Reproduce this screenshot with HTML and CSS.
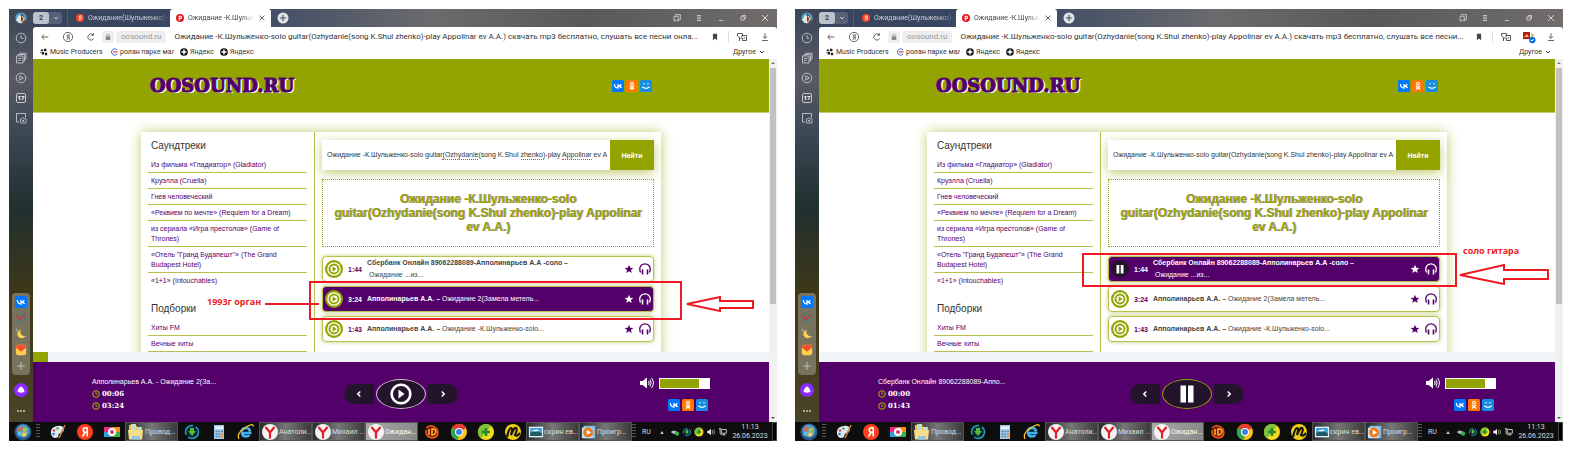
FILE: index.html
```html
<!DOCTYPE html>
<html lang="ru">
<head>
  <meta charset="UTF-8" />
  <meta name="viewport" content="width=device-width, initial-scale=1.0"/>
  <title>Ожидание - oosound.ru</title>
  <link rel="stylesheet" href="styles.css">
</head>
<body>
  <!-- icons -->
  <svg class="sprite" aria-hidden="true">
    <symbol id="avatar" viewBox="0 0 12 12"><circle cx="6" cy="6" r="5.6" fill="#4fa3cf"/><path d="M1 8 4 3l2 1 1 7-3 0z" fill="#e9e4d8"/><path d="M6 1 9 4 8 7l3 2-3 2.200-2-2z" fill="#7a3b2a"/><path d="M7 4l2 3-2 3" stroke="#f3c19a" stroke-width="1.200" fill="none"/></symbol>
    <symbol id="chevron" viewBox="0 0 8 8"><path d="M2 3l2 2 2-2" fill="none" stroke="currentColor"/></symbol>
    <symbol id="ya" viewBox="0 0 16 16"><circle cx="8" cy="8" r="8" fill="#fc3f1d"/><path d="M10.200 3.500v9M10.200 3.700H8.600c-3.200 0-3.200 4.600 0 4.600h1.600M8 8.500l-2.500 4" fill="none" stroke="#fff" stroke-width="1.600"/></symbol>
    <symbol id="pin" viewBox="0 0 16 16"><circle cx="8" cy="8" r="8" fill="#e8141c"/><path d="M6.500 13V4.500h2.200a2.300 2.300 0 0 1 0 4.800H7" fill="none" stroke="#fff" stroke-width="2.200"/></symbol>
    <symbol id="close" viewBox="0 0 10 10"><path d="M2 2l6 6M8 2L2 8" stroke="currentColor" fill="none"/></symbol>
    <symbol id="plus-round" viewBox="0 0 12 12"><circle cx="6" cy="6" r="5.500" fill="#dfe2e6"/><path d="M6 3v6M3 6h6" stroke="#4a5360" stroke-width="1.200"/></symbol>
    <symbol id="copies" viewBox="0 0 12 12"><path d="M4 3V2h6v6l-2 0M2.500 4h5v6l-2.500-1.800L2.500 10z" fill="none" stroke="currentColor"/></symbol>
    <symbol id="menu" viewBox="0 0 12 12"><path d="M3.500 3h5M3.500 5h5M3.500 7h5M3.500 9h5" stroke="currentColor"/></symbol>
    <symbol id="minimize" viewBox="0 0 12 12"><path d="M3.500 9h5" stroke="currentColor"/></symbol>
    <symbol id="restore" viewBox="0 0 12 12"><path d="M5 4V3h4v4H8M3.500 4.500h4v4h-4z" stroke="currentColor" fill="none"/></symbol>
    <symbol id="back" viewBox="0 0 12 12"><path d="M10 6H2.500M5 3L2.200 6 5 9" stroke="currentColor" fill="none"/></symbol>
    <symbol id="ya-ring" viewBox="0 0 12 12"><circle cx="6" cy="6" r="4.600" stroke="currentColor" stroke-width=".8" fill="none"/><path d="M7.200 3.500v5.200M7.200 3.700h-.8c-1.800 0-1.800 2.500 0 2.500h.8M6.200 6.200L4.800 8.700" stroke="currentColor" stroke-width=".8" fill="none"/></symbol>
    <symbol id="reload" viewBox="0 0 12 12"><path d="M9.300 7.500A3.700 3.700 0 1 1 8.300 3.200M9 1.500v2.400H6.500" stroke="currentColor" fill="none"/></symbol>
    <symbol id="lock" viewBox="0 0 12 12"><rect x="2.500" y="5" width="7" height="5.500" rx=".8" fill="currentColor"/><path d="M4 5V3.800a2 2 0 0 1 4 0V5" stroke="currentColor" fill="none"/></symbol>
    <symbol id="bookmark" viewBox="0 0 12 12"><path d="M3.500 2h5v8L6 7.800 3.500 10z" fill="currentColor"/></symbol>
    <symbol id="translate" viewBox="0 0 12 12"><path d="M5.500 4.500h5v5h-4V7M3.500 10V6.500L1.500 5V2.500h5V5L5 6.500V8" stroke="currentColor" stroke-width=".9" fill="none"/><path d="M7.500 7h1.500" stroke="currentColor"/></symbol>
    <symbol id="download" viewBox="0 0 12 12"><path d="M6 1.500v6M3.500 5.200L6 7.700l2.500-2.500M2.500 10.200h7" stroke="currentColor" fill="none"/></symbol>
    <symbol id="ext" viewBox="0 0 14 14"><rect x="1" y="2" width="7" height="7" fill="#b01b12"/><path d="M2 7l3-3 2 3z" fill="#f6c43c"/><path d="M9 3l3 2-2 3" fill="#e5a52a"/><circle cx="10.300" cy="10" r="3.200" fill="#0a6ee0"/><path d="M8.800 10l1.200 1 1.700-2" stroke="#fff" fill="none"/></symbol>
    <symbol id="dots-x" viewBox="0 0 10 10"><path d="M1 2h3v2H1zM5 1h3v3H5zM2 5h3v3H2zM6 6h3v3H6zM0 5h1v1H0z" fill="#222"/></symbol>
    <symbol id="bluec" viewBox="0 0 10 10"><path d="M9 2.500A4 4 0 1 0 9 7.500" stroke="#3f6fe8" stroke-width="1.200" fill="none"/><path d="M3.500 4.300h6M4 6h5" stroke="#e0533c"/></symbol>
    <symbol id="star-dark" viewBox="0 0 10 10"><circle cx="5" cy="5" r="4.800" fill="#111"/><path d="M5 1.500Q5.200 4.800 8.500 5 5.200 5.200 5 8.500 4.800 5.200 1.500 5 4.800 4.800 5 1.500z" fill="#fff" stroke="#fff" stroke-width=".5"/></symbol>
    <symbol id="clock" viewBox="0 0 12 12"><circle cx="6" cy="6" r="4.800" stroke="currentColor" stroke-width=".9" fill="none"/><path d="M6 3v3.300h2.500" stroke="currentColor" stroke-width=".9" fill="none"/></symbol>
    <symbol id="time" viewBox="0 0 8 8"><circle cx="4" cy="4" r="3.300" stroke="currentColor" fill="none"/><path d="M4 2v2.300h1.500" stroke="currentColor" stroke-width=".8" fill="none"/></symbol>
    <symbol id="stack" viewBox="0 0 12 12"><path d="M1.500 4h6.500v7H1.500zM3 4V2.500h6.500V9H8M5 2.300V1.200h6V7H9.700M3 6.500h3.500M3 8.500h2.500" stroke="currentColor" stroke-width=".9" fill="none"/></symbol>
    <symbol id="play-ring" viewBox="0 0 12 12"><circle cx="6" cy="6" r="4.800" stroke="currentColor" stroke-width=".9" fill="none"/><path d="M4.800 3.800v4.400L8.300 6z" stroke="currentColor" stroke-width=".9" fill="none"/></symbol>
    <symbol id="shot" viewBox="0 0 12 12"><path d="M4 10H1.500V1.500h9v4" stroke="currentColor" stroke-width=".9" fill="none"/><path d="M5.500 7h1l.7-1h2l.7 1H11v4H5.500z" stroke="currentColor" stroke-width=".8" fill="none"/><circle cx="8.200" cy="8.800" r="1" fill="currentColor"/></symbol>
    <symbol id="vk" viewBox="0 0 12 12"><rect width="12" height="12" rx="1.500" fill="#07f"/><path d="M2.300 4c.3 2.600 1.500 4 3.700 4V4M9.300 4C8.700 5.200 7.800 6 6.200 6 7.800 6 9 6.800 9.500 8" stroke="#fff" stroke-width="1.300" fill="none"/></symbol>
    <symbol id="ok" viewBox="0 0 12 12"><rect width="12" height="12" rx="1.500" fill="#f70"/><circle cx="6" cy="3.700" r="1.400" stroke="#fff" stroke-width="1.100" fill="none"/><path d="M3.700 6.300q2.300 1.600 4.600 0M6 7.200v.4M6 7.300L4 9.700M6 7.300l2 2.400" stroke="#fff" stroke-width="1.200" fill="none"/></symbol>
    <symbol id="mm" viewBox="0 0 12 12"><rect width="12" height="12" rx="1.500" fill="#168de2"/><path d="M4 3v1.500M8 3v1.500M2 7.200h1.200q2.800 2.200 5.600 0H10" stroke="#fff" stroke-width="1.100" fill="none"/></symbol>
    <symbol id="bird" viewBox="0 0 14 14"><circle cx="7" cy="7" r="4.500" stroke="#2b7d8d" fill="none"/><path d="M1 3l5 5 7-5-5 5-3 1z" fill="#e02c34" stroke="#e02c34" stroke-width=".6"/></symbol>
    <symbol id="moon" viewBox="0 0 14 14"><path d="M7 2a5 5 0 1 0 5 7.500A5 5 0 0 1 7 2z" fill="#ffd24a"/><path d="M1 4l1-3 1 3 M9 10h4" stroke="#cfd5da" stroke-width=".6" fill="none"/></symbol>
    <symbol id="mail" viewBox="0 0 14 14"><rect x="1" y="1" width="12" height="12" rx="2.500" fill="#ffcf4a"/><path d="M1 4Q1 1 4 1h6q3 0 3 3L7 9z" fill="#f4512c"/></symbol>
    <symbol id="plus" viewBox="0 0 12 12"><path d="M6 2v8M2 6h8" stroke="currentColor" stroke-width=".9"/></symbol>
    <symbol id="alice" viewBox="0 0 14 14"><circle cx="7" cy="7" r="7" fill="#8a2bff"/><path d="M7 3.500c1.200 0 3.500 3.500 3.500 4.800C10.500 10.200 3.500 10.200 3.500 8.300 3.500 7 5.800 3.500 7 3.500z" fill="#fff"/></symbol>
    <symbol id="more" viewBox="0 0 12 12"><path d="M2 6h2M5 6h2M8 6h2" stroke="currentColor" stroke-width="1.400"/></symbol>
    <symbol id="play" viewBox="0 0 18 18"><circle cx="9" cy="9" r="9" fill="#93a300"/><circle cx="9" cy="9" r="6.800" fill="#fff"/><circle cx="9" cy="9" r="4.500" fill="none" stroke="#93a300" stroke-width="1.900"/><path d="M7.600 6.300v5.400L11.700 9z" fill="#93a300"/></symbol>
    <symbol id="pause" viewBox="0 0 18 18"><circle cx="9" cy="9" r="9" fill="#23142c"/><path d="M5.500 5h2.800v8.500H5.500zM9.700 5h2.800v8.500H9.700z" fill="#fff"/></symbol>
    <symbol id="star" viewBox="0 0 10 10"><path d="M5 .8l1.200 2.900 3.200.2-2.500 2 .9 3.100L5 7.300 2.200 9l.9-3.100-2.500-2 3.200-.2z" fill="currentColor"/></symbol>
    <symbol id="phones" viewBox="0 0 12 12"><path d="M1.500 9.500C-.6 4.500 2 .9 6 .9s6.600 3.600 4.500 8.600" stroke="currentColor" stroke-width="1.300" fill="none"/><path d="M2.700 6.500h1.600v5H2.700zM7.700 6.500h1.600v5H7.700z" fill="currentColor"/></symbol>
    <symbol id="prev" viewBox="0 0 8 8"><path d="M5.300 1.500L2.800 4l2.500 2.500" stroke="currentColor" stroke-width="1.500" fill="none"/></symbol>
    <symbol id="next" viewBox="0 0 8 8"><path d="M2.700 1.500L5.200 4 2.700 6.500" stroke="currentColor" stroke-width="1.500" fill="none"/></symbol>
    <symbol id="big-play" viewBox="0 0 22 22"><circle cx="11" cy="11" r="9.300" stroke="#fff" stroke-width="2.600" fill="none"/><path d="M8.500 6.500v9l6-4.500z" fill="#fff"/></symbol>
    <symbol id="big-pause" viewBox="0 0 22 22"><path d="M4.500 2.500h5.500v17H4.500zM12 2.500h5.500v17H12z" fill="#fff"/></symbol>
    <symbol id="speaker" viewBox="0 0 15 12"><path d="M0 4h2.500L7 .5v11L2.500 8H0z" fill="#fff"/><path d="M8.500 4q1.200 2 0 4M10 2.500q2.200 3.500 0 7M11.600 1q3.600 5 0 10" stroke="#fff" fill="none"/></symbol>
    <symbol id="start" viewBox="0 0 18 18"><circle cx="9" cy="9" r="8.500" fill="#245a8c"/><circle cx="9" cy="8" r="6.500" fill="#5b9cc6"/><path d="M4.500 5q2-1.500 4-.5L8 8.200q-2-.8-4 .3z" fill="#ef6238"/><path d="M9.300 4.800q2 1 4-.3l-.6 3.800q-2 1.200-4 .2z" fill="#9bd049"/><path d="M3.800 9.300q2-1.200 4-.3L7.300 12.600q-1.800-.8-3.800.4z" fill="#5bc1ef"/><path d="M8.600 9.300q2 1 4-.2L12 12.800q-2 1.200-3.900.2z" fill="#ffd13c"/></symbol>
    <symbol id="paint" viewBox="0 0 18 18"><path d="M2 11Q1 4 8 3t7 4q-1 3-4 3-2 1-2 4-5 3-7-3z" fill="#dce8f2"/><circle cx="5" cy="7.500" r="1.300" fill="#e24b3a"/><circle cx="8.500" cy="5.500" r="1.200" fill="#49a84a"/><circle cx="4.500" cy="11" r="1.300" fill="#3a7bd0"/><path d="M16 2L10 15" stroke="#c98442" stroke-width="1.600"/></symbol>
    <symbol id="cam" viewBox="0 0 18 18"><path d="M1 4h8v5H1z" fill="#e92c86"/><path d="M9 4h8v5H9z" fill="#f58c20"/><path d="M1 9h8v5H1z" fill="#2aa0dc"/><path d="M9 9h8v5H9z" fill="#3eb049"/><circle cx="9" cy="9" r="4" fill="#fff"/><circle cx="9" cy="9" r="2" fill="#e35"/></symbol>
    <symbol id="folder" viewBox="0 0 18 18"><path d="M2 2h7l1 2h5v12H2z" fill="#e8bd5a"/><path d="M4 1h5v6H4zM10 4h4v6h-4z" fill="#bfe0c4"/><path d="M1 7h15l-1 9.500H2z" fill="#f7dd8a"/><path d="M5 13h8v3.500H5z" fill="#8ec7e8"/></symbol>
    <symbol id="idm" viewBox="0 0 18 18"><circle cx="9" cy="9" r="6.500" stroke="#1fa3c0" stroke-width="1.500" stroke-dasharray="14 3" fill="#08262e"/><path d="M7 5h4v3h2l-4 5-4-5h2z" fill="#54b93a"/></symbol>
    <symbol id="calc" viewBox="0 0 18 18"><rect x="4" y="2" width="10" height="14" fill="#a7cbe6"/><path d="M5 3.500h8v2.500H5z" fill="#e9f5fc"/><path d="M5.500 8.500h2M8.500 8.500h1.500M11 8.500h2M5.500 11h2M8.500 11h1.500M5.500 13.500h2M8.500 13.500h1.500" stroke="#50809f" stroke-width="1.300"/><path d="M11 10.300h2v4h-2z" fill="#f08a3c"/></symbol>
    <symbol id="ie" viewBox="0 0 18 18"><path d="M14.500 10H5q.5 3.500 4 3.500 2.500 0 3.300-1.500M4.500 8.500Q5.500 5 9 5t4 3.500" stroke="#43b1ee" stroke-width="2.600" fill="none"/><path d="M2 16Q-1 10 9 4q8-4.500 7-.5" stroke="#f5c32e" stroke-width="1.300" fill="none"/></symbol>
    <symbol id="yb" viewBox="0 0 18 18"><circle cx="9" cy="9" r="8" fill="#f4f4f4"/><path d="M4.500 4L9 9.500 13.500 4M9 9v6.500" stroke="#e01f26" stroke-width="2.200" fill="none"/></symbol>
    <symbol id="fire" viewBox="0 0 18 18"><circle cx="9" cy="9" r="6" fill="#7a1d06"/><path d="M3 5q5-5 11 1 3 8-5 9-7-1-6-8" stroke="#f0551c" stroke-width="1.600" fill="none"/><path d="M6 6v6M9 6q5 0 3.500 4-1 2-3.500 2z" stroke="#ffb52c" stroke-width="1.500" fill="none"/></symbol>
    <symbol id="chrome" viewBox="0 0 18 18"><circle cx="9" cy="9" r="8" fill="#fbc116"/><path d="M9 9L2 5a8 8 0 0 1 14 0z" fill="#e33b2e"/><path d="M9 9L2 5a8 8 0 0 0 6 12z" fill="#2da94f"/><circle cx="9" cy="9" r="4" fill="#fff"/><circle cx="9" cy="9" r="3" fill="#3f7ee8"/></symbol>
    <symbol id="gplus" viewBox="0 0 18 18"><circle cx="9" cy="9" r="8" fill="#f5d91c"/><path d="M1.500 6A8 8 0 0 1 14 2.800L4 15.300A8 8 0 0 1 1.500 6z" fill="#7cc23a"/><path d="M9 5v8M5 9h8" stroke="#1f8a2f" stroke-width="2.600"/></symbol>
    <symbol id="muz" viewBox="0 0 18 18"><circle cx="9" cy="9" r="8" fill="#f3cf14"/><path d="M3 14Q5 5 7 5t0 7q3-8 5-7t-1 7q2 2 5-2" stroke="#161616" stroke-width="2.200" fill="none"/></symbol>
    <symbol id="image" viewBox="0 0 18 18"><path d="M1 3h16v12H1z" fill="#dff0fa"/><path d="M2.500 4.500h13v9h-13z" fill="#3c9bd8"/><path d="M2.500 10q5-3 13 0v3.500h-13z" fill="#1c5a66"/><path d="M4 8q4-3 9-1l-4 1.500z" fill="#fff"/></symbol>
    <symbol id="wmp" viewBox="0 0 18 18"><path d="M3 2h13v14H3z" fill="#7ec0ec"/><path d="M1 4h12v12H1z" fill="#c5e3f6"/><circle cx="8" cy="9.500" r="5.500" fill="#f07818"/><path d="M6.500 6.500v6l5-3z" fill="#fff"/></symbol>
    <symbol id="tray-usb" viewBox="0 0 12 12"><path d="M1 6q3-3 6-1l2 1-2 2q-3 1-6-2z" fill="#b9bdc0"/><circle cx="8.500" cy="8" r="2.500" fill="#36b54a"/></symbol>
    <symbol id="tray-vol" viewBox="0 0 12 12"><path d="M1.500 4.500h2L6 2v8L3.500 7.500h-2z" fill="#eee"/><path d="M7.500 4q1 2 0 4M9.300 2.800q1.700 3.200 0 6.400" stroke="#ccc" stroke-width=".8" fill="none"/></symbol>
    <symbol id="tray-net" viewBox="0 0 12 12"><path d="M4 3h6v4.500H4zM5 9.500h4M7 7.500v2M2.500 2v5q0 2 2 2.500M1 2h3" stroke="#ddd" fill="none"/></symbol>
  </svg>

  <!-- 1993, organ -->
  <section class="desktop">
    <aside class="sidebar">
      <svg class="i12"><use href="#avatar"/></svg>
      <svg class="i12"><use href="#clock"/></svg>
      <svg class="i12"><use href="#stack"/></svg>
      <svg class="i12"><use href="#play-ring"/></svg>
      <span class="day">17</span>
      <svg class="i12"><use href="#shot"/></svg>
      <div class="dock">
        <svg class="i12"><use href="#vk"/></svg>
        <svg class="i12"><use href="#bird"/></svg>
        <svg class="i12"><use href="#moon"/></svg>
        <svg class="i12"><use href="#mail"/></svg>
        <svg class="i12"><use href="#plus"/></svg>
      </div>
      <svg class="i14"><use href="#alice"/></svg>
      <svg class="i12"><use href="#more"/></svg>
    </aside>

    <div class="browser">
      <div class="tabs">
        <button class="group"><b>2</b><svg class="i8"><use href="#chevron"/></svg></button>
        <button class="tab"><svg class="i8"><use href="#ya"/></svg><span>Ожидание(Шульженко) со</span></button>
        <button class="tab active"><svg class="i8"><use href="#pin"/></svg><span>Ожидание -К.Шульжен</span><svg class="i8"><use href="#close"/></svg></button>
        <button class="add"><svg class="i12"><use href="#plus-round"/></svg></button>
        <div class="window-buttons">
          <button><svg class="i10"><use href="#copies"/></svg></button>
          <button><svg class="i10"><use href="#menu"/></svg></button>
          <button><svg class="i10"><use href="#minimize"/></svg></button>
          <button><svg class="i10"><use href="#restore"/></svg></button>
          <button><svg class="i10"><use href="#close"/></svg></button>
        </div>
      </div>

      <div class="address">
        <button class="nav"><svg class="i10"><use href="#back"/></svg></button>
        <button class="nav"><svg class="i12"><use href="#ya-ring"/></svg></button>
        <button class="nav"><svg class="i10"><use href="#reload"/></svg></button>
        <span class="lock"><svg class="i8"><use href="#lock"/></svg></span>
        <span class="domain">oosound.ru</span>
        <input class="url" type="text" aria-label="Адрес" value="Ожидание -К.Шульженко-solo guitar(Ozhydanie(song K.Shul zhenko)-play Appolinar ev A.A.) скачать mp3 бесплатно, слушать все песни онла..."/>
        <button class="tool"><svg class="i10"><use href="#bookmark"/></svg></button>
        <button class="tool split"><svg class="i12"><use href="#translate"/></svg></button>
        <button class="tool"><svg class="i10"><use href="#download"/></svg></button>
      </div>

      <div class="bookmarks">
        <a href="#"><svg class="i8"><use href="#dots-x"/></svg><span class="wide">Music Producers |</span></a>
        <a href="#"><svg class="i8"><use href="#bluec"/></svg><span class="wide">ролан парке маль</span></a>
        <a href="#"><svg class="i8"><use href="#star-dark"/></svg><span>Яндекс</span></a>
        <a href="#"><svg class="i8"><use href="#star-dark"/></svg><span>Яндекс</span></a>
        <button class="other">Другое <svg class="i8"><use href="#chevron"/></svg></button>
      </div>

      <div class="view">
        <div class="page">
          <header class="header">
            <a class="logo" href="#">OOSOUND.RU</a>
            <div class="social">
              <a href="#"><svg class="i12"><use href="#vk"/></svg></a>
              <a href="#"><svg class="i12"><use href="#ok"/></svg></a>
              <a href="#"><svg class="i12"><use href="#mm"/></svg></a>
            </div>
          </header>

          <div class="scroll">
            <div class="content">
              <nav class="menu">
                <h3>Саундтреки</h3>
                <ul>
                  <li><a href="#">Из фильма «Гладиатор» (Gladiator)</a></li>
                  <li><a href="#">Круэлла (Cruella)</a></li>
                  <li><a href="#">Гнев человеческий</a></li>
                  <li><a href="#">«Реквием по мечте» (Requiem for a Dream)</a></li>
                  <li><a href="#">из сериала «Игра престолов» (Game of Thrones)</a></li>
                  <li><a href="#">«Отель "Гранд Будапешт"» (The Grand Budapest Hotel)</a></li>
                  <li><a href="#">«1+1» (Intouchables)</a></li>
                </ul>
                <h3>Подборки</h3>
                <ul>
                  <li><a href="#">Хиты FM</a></li>
                  <li><a href="#">Вечные хиты</a></li>
                  <li></li>
                </ul>
              </nav>
              <main class="main">
                <form class="search">
                  <input type="text" aria-label="Поиск" value="Ожидание -К.Шульженко-solo guitar(Ozhydanie(song K.Shul zhenko)-play Appolinar ev A"/>
                  <button type="button">Найти</button>
                  <i class="typo typo-1"></i><i class="typo typo-2"></i><i class="typo typo-3"></i>
                </form>
                <h1>Ожидание -К.Шульженко-solo<br/>guitar(Ozhydanie(song K.Shul zhenko)-play Appolinar<br/>ev A.A.)</h1>
                <div class="track">
                  <button><svg class="i18"><use href="#play"/></svg></button>
                  <span class="time">1:44</span>
                  <p><b>Сбербанк Онлайн 89062288089-Апполинарьев А.А -соло –</b> <span class="song">Ожидание ...из...</span></p>
                  <button><svg class="i10"><use href="#star"/></svg></button>
                  <button><svg class="i12"><use href="#phones"/></svg></button>
                </div>
                <div class="track active">
                  <button><svg class="i18"><use href="#play"/></svg></button>
                  <span class="time">3:24</span>
                  <p><b>Апполинарьев А.А. –</b> Ожидание 2(Замела метель...</p>
                  <button><svg class="i10"><use href="#star"/></svg></button>
                  <button><svg class="i12"><use href="#phones"/></svg></button>
                </div>
                <div class="track">
                  <button><svg class="i18"><use href="#play"/></svg></button>
                  <span class="time">1:43</span>
                  <p><b>Апполинарьев А.А. –</b> Ожидание -К.Шульженко-solo...</p>
                  <button><svg class="i10"><use href="#star"/></svg></button>
                  <button><svg class="i12"><use href="#phones"/></svg></button>
                </div>
              </main>
            </div>
          </div>

          <input class="seek" type="range" aria-label="Позиция" min="0" max="204" value="4" style="--fill: 2%"/>
          <footer class="player">
            <div class="now">
              <p>Апполинарьев А.А. - Ожидание 2(За...</p>
              <p class="clock"><svg class="i8"><use href="#time"/></svg><span>00:06</span></p>
              <p class="clock"><svg class="i8"><use href="#time"/></svg><span>03:24</span></p>
            </div>
            <div class="controls">
              <button class="prev"><svg class="i8"><use href="#prev"/></svg></button>
              <button class="toggle"><svg class="i22"><use href="#big-play"/></svg></button>
              <button class="next"><svg class="i8"><use href="#next"/></svg></button>
            </div>
            <div class="right">
              <div class="volume"><svg class="speaker"><use href="#speaker"/></svg><input type="range" aria-label="Громкость" value="79" style="--fill: 79%"/></div>
              <div class="social">
                <a href="#"><svg class="i12"><use href="#vk"/></svg></a>
                <a href="#"><svg class="i12"><use href="#ok"/></svg></a>
                <a href="#"><svg class="i12"><use href="#mm"/></svg></a>
              </div>
            </div>
          </footer>
        </div>
        <div class="scrollbar"><div class="thumb"></div></div>
      </div>
    </div>

    <div class="taskbar">
      <button class="start"><svg class="i18"><use href="#start"/></svg></button>
      <i class="grip"></i>
      <button class="app"><svg class="i18"><use href="#paint"/></svg></button>
      <button class="app"><svg class="i16"><use href="#ya"/></svg></button>
      <button class="app"><svg class="i18"><use href="#cam"/></svg></button>
      <button class="task"><svg class="i18"><use href="#folder"/></svg><span>Провод...</span></button>
      <button class="app"><svg class="i18"><use href="#idm"/></svg></button>
      <button class="app"><svg class="i18"><use href="#calc"/></svg></button>
      <button class="app"><svg class="i18"><use href="#ie"/></svg></button>
      <button class="task"><svg class="i18"><use href="#yb"/></svg><span>Анатоли...</span></button>
      <button class="task"><svg class="i18"><use href="#yb"/></svg><span>Михаил ...</span></button>
      <button class="task current"><svg class="i18"><use href="#yb"/></svg><span>Ожидан...</span></button>
      <button class="app"><svg class="i18"><use href="#fire"/></svg></button>
      <button class="app"><svg class="i18"><use href="#chrome"/></svg></button>
      <button class="app"><svg class="i18"><use href="#gplus"/></svg></button>
      <button class="app"><svg class="i18"><use href="#muz"/></svg></button>
      <button class="task"><svg class="i16"><use href="#image"/></svg><span>скрин ев...</span></button>
      <button class="task"><svg class="i16"><use href="#wmp"/></svg><span>Проигр...</span></button>
      <div class="tray">
        <i class="grip"></i>
        <span class="lang">RU</span>
        <span class="up">▲</span>
        <svg class="i10"><use href="#tray-usb"/></svg>
        <svg class="i10"><use href="#idm"/></svg>
        <svg class="i10"><use href="#gplus"/></svg>
        <svg class="i10"><use href="#tray-vol"/></svg>
        <svg class="i10"><use href="#tray-net"/></svg>
        <time>11:13<br/>26.06.2023</time>
        <i class="show-desktop"></i>
      </div>
    </div>

    <!-- red marks over the screen -->
    <div class="note organ">1993г орган</div>
    <div class="note-line"></div>
    <div class="frame frame-organ"></div>
    <svg class="arrow arrow-organ" viewBox="0 0 68 16"><path d="M1 8L34 1v4h33v7H34v3z"/></svg>
  </section>

  <!-- guitar solo -->
  <section class="desktop">
    <aside class="sidebar">
      <svg class="i12"><use href="#avatar"/></svg>
      <svg class="i12"><use href="#clock"/></svg>
      <svg class="i12"><use href="#stack"/></svg>
      <svg class="i12"><use href="#play-ring"/></svg>
      <span class="day">17</span>
      <svg class="i12"><use href="#shot"/></svg>
      <div class="dock">
        <svg class="i12"><use href="#vk"/></svg>
        <svg class="i12"><use href="#bird"/></svg>
        <svg class="i12"><use href="#moon"/></svg>
        <svg class="i12"><use href="#mail"/></svg>
        <svg class="i12"><use href="#plus"/></svg>
      </div>
      <svg class="i14"><use href="#alice"/></svg>
      <svg class="i12"><use href="#more"/></svg>
    </aside>

    <div class="browser">
      <div class="tabs">
        <button class="group"><b>2</b><svg class="i8"><use href="#chevron"/></svg></button>
        <button class="tab"><svg class="i8"><use href="#ya"/></svg><span>Ожидание(Шульженко) со</span></button>
        <button class="tab active"><svg class="i8"><use href="#pin"/></svg><span>Ожидание -К.Шульжен</span><svg class="i8"><use href="#close"/></svg></button>
        <button class="add"><svg class="i12"><use href="#plus-round"/></svg></button>
        <div class="window-buttons">
          <button><svg class="i10"><use href="#copies"/></svg></button>
          <button><svg class="i10"><use href="#menu"/></svg></button>
          <button><svg class="i10"><use href="#minimize"/></svg></button>
          <button><svg class="i10"><use href="#restore"/></svg></button>
          <button><svg class="i10"><use href="#close"/></svg></button>
        </div>
      </div>

      <div class="address">
        <button class="nav"><svg class="i10"><use href="#back"/></svg></button>
        <button class="nav"><svg class="i12"><use href="#ya-ring"/></svg></button>
        <button class="nav"><svg class="i10"><use href="#reload"/></svg></button>
        <span class="lock"><svg class="i8"><use href="#lock"/></svg></span>
        <span class="domain">oosound.ru</span>
        <input class="url" type="text" aria-label="Адрес" value="Ожидание -К.Шульженко-solo guitar(Ozhydanie(song K.Shul zhenko)-play Appolinar ev A.A.) скачать mp3 бесплатно, слушать все песни..."/>
        <button class="tool"><svg class="i10"><use href="#bookmark"/></svg></button>
        <button class="tool split"><svg class="i12"><use href="#translate"/></svg></button>
        <button class="tool"><svg class="i14"><use href="#ext"/></svg></button>
        <button class="tool"><svg class="i10"><use href="#download"/></svg></button>
      </div>

      <div class="bookmarks">
        <a href="#"><svg class="i8"><use href="#dots-x"/></svg><span class="wide">Music Producers |</span></a>
        <a href="#"><svg class="i8"><use href="#bluec"/></svg><span class="wide">ролан парке маль</span></a>
        <a href="#"><svg class="i8"><use href="#star-dark"/></svg><span>Яндекс</span></a>
        <a href="#"><svg class="i8"><use href="#star-dark"/></svg><span>Яндекс</span></a>
        <button class="other">Другое <svg class="i8"><use href="#chevron"/></svg></button>
      </div>

      <div class="view">
        <div class="page">
          <header class="header">
            <a class="logo" href="#">OOSOUND.RU</a>
            <div class="social">
              <a href="#"><svg class="i12"><use href="#vk"/></svg></a>
              <a href="#"><svg class="i12"><use href="#ok"/></svg></a>
              <a href="#"><svg class="i12"><use href="#mm"/></svg></a>
            </div>
          </header>

          <div class="scroll">
            <div class="content">
              <nav class="menu">
                <h3>Саундтреки</h3>
                <ul>
                  <li><a href="#">Из фильма «Гладиатор» (Gladiator)</a></li>
                  <li><a href="#">Круэлла (Cruella)</a></li>
                  <li><a href="#">Гнев человеческий</a></li>
                  <li><a href="#">«Реквием по мечте» (Requiem for a Dream)</a></li>
                  <li><a href="#">из сериала «Игра престолов» (Game of Thrones)</a></li>
                  <li><a href="#">«Отель "Гранд Будапешт"» (The Grand Budapest Hotel)</a></li>
                  <li><a href="#">«1+1» (Intouchables)</a></li>
                </ul>
                <h3>Подборки</h3>
                <ul>
                  <li><a href="#">Хиты FM</a></li>
                  <li><a href="#">Вечные хиты</a></li>
                  <li></li>
                </ul>
              </nav>
              <main class="main">
                <form class="search">
                  <input type="text" aria-label="Поиск" value="Ожидание -К.Шульженко-solo guitar(Ozhydanie(song K.Shul zhenko)-play Appolinar ev A"/>
                  <button type="button">Найти</button>
                </form>
                <h1>Ожидание -К.Шульженко-solo<br/>guitar(Ozhydanie(song K.Shul zhenko)-play Appolinar<br/>ev A.A.)</h1>
                <div class="track active">
                  <button><svg class="i18"><use href="#pause"/></svg></button>
                  <span class="time">1:44</span>
                  <p><b>Сбербанк Онлайн 89062288089-Апполинарьев А.А -соло –</b> <span class="song">Ожидание ...из...</span></p>
                  <button><svg class="i10"><use href="#star"/></svg></button>
                  <button><svg class="i12"><use href="#phones"/></svg></button>
                </div>
                <div class="track">
                  <button><svg class="i18"><use href="#play"/></svg></button>
                  <span class="time">3:24</span>
                  <p><b>Апполинарьев А.А. –</b> Ожидание 2(Замела метель...</p>
                  <button><svg class="i10"><use href="#star"/></svg></button>
                  <button><svg class="i12"><use href="#phones"/></svg></button>
                </div>
                <div class="track">
                  <button><svg class="i18"><use href="#play"/></svg></button>
                  <span class="time">1:43</span>
                  <p><b>Апполинарьев А.А. –</b> Ожидание -К.Шульженко-solo...</p>
                  <button><svg class="i10"><use href="#star"/></svg></button>
                  <button><svg class="i12"><use href="#phones"/></svg></button>
                </div>
              </main>
            </div>
          </div>

          <input class="seek" type="range" aria-label="Позиция" min="0" max="103" value="0" style="--fill: 0%"/>
          <footer class="player playing">
            <div class="now">
              <p>Сбербанк Онлайн 89062288089-Аппо...</p>
              <p class="clock"><svg class="i8"><use href="#time"/></svg><span>00:00</span></p>
              <p class="clock"><svg class="i8"><use href="#time"/></svg><span>01:43</span></p>
            </div>
            <div class="controls">
              <button class="prev"><svg class="i8"><use href="#prev"/></svg></button>
              <button class="toggle"><svg class="i22"><use href="#big-pause"/></svg></button>
              <button class="next"><svg class="i8"><use href="#next"/></svg></button>
            </div>
            <div class="right">
              <div class="volume"><svg class="speaker"><use href="#speaker"/></svg><input type="range" aria-label="Громкость" value="79" style="--fill: 79%"/></div>
              <div class="social">
                <a href="#"><svg class="i12"><use href="#vk"/></svg></a>
                <a href="#"><svg class="i12"><use href="#ok"/></svg></a>
                <a href="#"><svg class="i12"><use href="#mm"/></svg></a>
              </div>
            </div>
          </footer>
        </div>
        <div class="scrollbar"><div class="thumb"></div></div>
      </div>
    </div>

    <div class="taskbar">
      <button class="start"><svg class="i18"><use href="#start"/></svg></button>
      <i class="grip"></i>
      <button class="app"><svg class="i18"><use href="#paint"/></svg></button>
      <button class="app"><svg class="i16"><use href="#ya"/></svg></button>
      <button class="app"><svg class="i18"><use href="#cam"/></svg></button>
      <button class="task"><svg class="i18"><use href="#folder"/></svg><span>Провод...</span></button>
      <button class="app"><svg class="i18"><use href="#idm"/></svg></button>
      <button class="app"><svg class="i18"><use href="#calc"/></svg></button>
      <button class="app"><svg class="i18"><use href="#ie"/></svg></button>
      <button class="task"><svg class="i18"><use href="#yb"/></svg><span>Анатоли...</span></button>
      <button class="task"><svg class="i18"><use href="#yb"/></svg><span>Михаил ...</span></button>
      <button class="task current"><svg class="i18"><use href="#yb"/></svg><span>Ожидан...</span></button>
      <button class="app"><svg class="i18"><use href="#fire"/></svg></button>
      <button class="app"><svg class="i18"><use href="#chrome"/></svg></button>
      <button class="app"><svg class="i18"><use href="#gplus"/></svg></button>
      <button class="app"><svg class="i18"><use href="#muz"/></svg></button>
      <button class="task"><svg class="i16"><use href="#image"/></svg><span>скрин ев...</span></button>
      <button class="task"><svg class="i16"><use href="#wmp"/></svg><span>Проигр...</span></button>
      <div class="tray">
        <i class="grip"></i>
        <span class="lang">RU</span>
        <span class="up">▲</span>
        <svg class="i10"><use href="#tray-usb"/></svg>
        <svg class="i10"><use href="#idm"/></svg>
        <svg class="i10"><use href="#gplus"/></svg>
        <svg class="i10"><use href="#tray-vol"/></svg>
        <svg class="i10"><use href="#tray-net"/></svg>
        <time>11:13<br/>26.06.2023</time>
        <i class="show-desktop"></i>
      </div>
    </div>

    <div class="note guitar">соло гитара</div>
    <div class="frame frame-guitar"></div>
    <svg class="arrow arrow-guitar" viewBox="0 0 90 21"><path d="M1 11L45 1v5h44v9H45v5z"/></svg>
  </section>
</body>
</html>
```
FILE: styles.css
```css
* {
  box-sizing: border-box;
}
body {
  margin: 0;
  padding: 9px;
  min-height: 100vh;
  display: grid;
  grid-template-columns: 1fr 1fr;
  gap: 18px;
  background: #fff;
  font-family: "Liberation Sans", Arial, sans-serif;
  font-size: 7px;
}
button {
  display: flex;
  align-items: center;
  justify-content: center;
  padding: 0;
  border: none;
  background: none;
  color: inherit;
  font: inherit;
}
input {
  margin: 0;
  font: inherit;
}
a {
  color: inherit;
  text-decoration: none;
}
p, h1, h3, ul {
  margin: 0;
  padding: 0;
}
svg {
  display: block;
  flex: none;
}
.sprite {
  position: absolute;
  width: 0;
  height: 0;
}
.i8 { width: 8px; height: 8px; }
.i10 { width: 10px; height: 10px; }
.i12 { width: 12px; height: 12px; }
.i14 { width: 14px; height: 14px; }
.i16 { width: 16px; height: 16px; }
.i18 { width: 18px; height: 18px; }
.i22 { width: 22px; height: 22px; }

.desktop {
  position: relative;
  display: grid;
  grid-template-columns: 24px minmax(0, 1fr);
  grid-template-rows: minmax(0, 1fr) 19px;
  height: calc(100vh - 18px);
  background: linear-gradient(to right, #35435c 0, #3a4964 30%, #6b6b6e 55%, #59595b 75%, #706d6b 100%);
}

/* left panel */
.sidebar {
  display: flex;
  flex-direction: column;
  align-items: center;
  gap: 8px;
  padding: 3px 0 5px;
  background: linear-gradient(#3c4658 0, #585a63 17%, #3c4855 30%, #20302f 48%, #3f3817 70%, #4a4428 100%);
  color: #c4c6ca;
}
.day {
  width: 10px;
  height: 10px;
  margin: 1px;
  border: 1px solid #c4c6ca;
  border-radius: 2px;
  color: #fff;
  font: bold 6px/8px "Open Sans", sans-serif;
  text-align: center;
}
.dock {
  display: flex;
  flex-direction: column;
  align-items: center;
  gap: 4px;
  width: 18px;
  margin-top: auto;
  padding: 3px 0;
  border-radius: 4px;
  background: #77735d;
}

/* browser chrome */
.browser {
  display: flex;
  flex-direction: column;
  min-width: 0;
  min-height: 0;
  font-family: Roboto, sans-serif;
}
.tabs {
  display: flex;
  align-items: center;
  height: 18px;
  color: #c9ced6;
}
.group {
  width: 29px;
  height: 12px;
  border-radius: 3px;
  background: #566178;
  justify-content: flex-start;
  gap: 3px;
}
.group b {
  width: 16px;
  border-radius: 3px;
  background: #bcc2ca;
  color: #333e50;
  line-height: 12px;
}
.tab {
  width: 103px;
  height: 100%;
  margin-left: 5px;
  padding-left: 8px;
  border-left: 1px solid #4f5c73;
  justify-content: flex-start;
  gap: 4px;
}
.tab span {
  flex: 1;
  overflow: hidden;
  white-space: nowrap;
  text-align: left;
  mask-image: linear-gradient(to right, #000 80%, transparent);
}
.tab.active {
  width: 101px;
  margin: 0;
  padding: 0 5px 0 6px;
  border: none;
  border-radius: 3px 3px 0 0;
  background: #fff;
  color: #444;
}
.add {
  margin-left: 6px;
}
.window-buttons {
  display: flex;
  margin: 0 1px 0 auto;
  color: #d5d5d5;
}
.window-buttons button {
  width: 22px;
}
.address {
  display: flex;
  align-items: center;
  height: 20px;
  padding-right: 1px;
  border-radius: 3px 3px 0 0;
  background: #fff;
  color: #444;
}
.nav {
  width: 23px;
}
.lock {
  padding: 2px;
  border-radius: 3px;
  background: #eee;
  color: #888;
}
.domain {
  margin: 0 8px 0 2px;
  padding: 0 5px;
  border-radius: 3px;
  background: #eee;
  color: #999;
  font-size: 8px;
  line-height: 12px;
}
.url {
  flex: 1;
  min-width: 0;
  padding: 0;
  border: none;
  color: #333;
  font-size: 8px;
  line-height: 12px;
}
.tool {
  width: 22px;
  height: 12px;
}
.tool.split {
  width: 26px;
  border-left: 1px solid #ddd;
  margin-left: 2px;
}
.bookmarks {
  display: flex;
  align-items: center;
  gap: 6px;
  height: 12px;
  padding: 0 11px 2px 7px;
  background: #fff;
  color: #333;
}
.bookmarks a {
  display: flex;
  align-items: center;
  gap: 2px;
}
.bookmarks .wide {
  width: 54px;
  overflow: hidden;
  white-space: nowrap;
}
.other {
  margin-left: auto;
  gap: 2px;
}

/* site */
.view {
  flex: 1;
  display: flex;
  min-height: 0;
}
.page {
  flex: 1;
  display: flex;
  flex-direction: column;
  min-width: 0;
  background: #fff;
  font-family: "Liberation Sans", Arial, sans-serif;
}
.header {
  display: flex;
  align-items: center;
  justify-content: space-between;
  height: 54px;
  padding: 0 117px;
  border-bottom: 1px solid #c3cc74;
  background: #93a300;
}
.logo {
  color: #54006b;
  font: bold 18px/20px "DejaVu Serif", serif;
  -webkit-text-stroke: 1px #54006b;
  text-shadow: 2px 1px 0 #fff;
}
.social {
  display: flex;
  gap: 2px;
}
.scroll {
  flex: 1;
  min-height: 0;
  overflow: hidden;
  padding: 19px 108px 0;
}
.content {
  display: flex;
  box-shadow: 0 0 12px #c3cc74;
  background: #fff;
}
.menu {
  width: 174px;
  padding: 4px 7px 8px;
  border-right: 1px solid #b5c04d;
}
.menu h3 {
  padding: 0 3px 1px;
  color: #333;
  font-size: 10px;
  font-weight: normal;
  line-height: 20px;
}
.menu ul {
  margin-bottom: 11px;
  list-style: none;
}
.menu li {
  padding: 3px 3px 2px;
  border-bottom: 1px solid #b5c04d;
  color: #54006b;
  line-height: 10px;
}
.menu li:last-child {
  border: none;
}
.main {
  flex: 1;
  min-width: 0;
  padding: 8px 7px;
}
.search {
  position: relative;
  display: flex;
  height: 30px;
  box-shadow: 0 3px 12px #c3cc74;
}
.search input {
  flex: 1;
  min-width: 0;
  padding: 0 0 0 5px;
  border: none;
  color: #333;
  line-height: 12px;
}
.search button {
  width: 44px;
  background: #93a300;
  color: #fff;
  font-weight: bold;
}
.typo {
  position: absolute;
  top: 19px;
  border-bottom: 1px dotted #e33;
}
.typo-1 { left: 120px; width: 36px; }
.typo-2 { left: 199px; width: 23px; }
.typo-3 { left: 240px; width: 30px; }
.main h1 {
  margin: 9px 0;
  padding: 12px 0;
  border: 1px dotted #93a300;
  color: #93a300;
  font-size: 12px;
  line-height: 14px;
  text-align: center;
  text-shadow: 1px 0 0 #b79ac0;
}
.track {
  display: flex;
  align-items: center;
  height: 26px;
  margin-bottom: 4px;
  padding: 0 2px;
  border: 1px solid #b5c04d;
  border-radius: 4px;
  box-shadow: 0 0 4px #c3cc74;
  color: #54006b;
}
.track .time {
  width: 24px;
  padding-left: 5px;
  font-weight: bold;
}
.track p {
  flex: 1;
  min-width: 0;
  color: #444;
  line-height: 12px;
}
.track .song {
  display: block;
  padding-left: 2px;
}
.track button + button {
  margin-left: 5px;
}
.track.active {
  background: #54006b;
}
.track.active, .track.active p {
  color: #fff;
}

/* player */
.seek {
  appearance: none;
  width: 100%;
  height: 10px;
  background: linear-gradient(to right, #93a300 var(--fill), #f0f4f8 var(--fill));
}
.seek::-webkit-slider-thumb, .volume input::-webkit-slider-thumb {
  appearance: none;
  width: 0;
}
.player {
  display: grid;
  grid-template-columns: 1fr auto 1fr;
  align-items: center;
  height: 60px;
  padding: 4px 59px 0;
  background: #54006b;
  color: #fff;
}
.now p {
  line-height: 12px;
}
.now .clock {
  display: flex;
  align-items: center;
  gap: 2px;
  color: #a9b800;
}
.clock span {
  color: #fff;
  font: bold 7px/12px "DejaVu Serif", serif;
}
.controls {
  display: flex;
  align-items: center;
  gap: 2px;
}
.prev, .next {
  width: 30px;
  height: 20px;
  background: #23142c;
}
.prev { border-radius: 12px 0 0 12px; }
.next { border-radius: 0 12px 12px 0; }
.toggle {
  width: 50px;
  height: 30px;
  border: 1px solid #cbbdd0;
  border-radius: 50%;
  background: #23142c;
}
.playing .toggle {
  border-color: #93a300;
}
.right {
  display: flex;
  flex-direction: column;
  align-items: flex-end;
  gap: 10px;
}
.right .social {
  padding-right: 2px;
}
.volume {
  display: flex;
  align-items: center;
  gap: 4px;
}
.speaker {
  width: 15px;
  height: 12px;
}
.volume input {
  appearance: none;
  width: 51px;
  height: 11px;
  border: 1px solid #fff;
  background: linear-gradient(to right, #93a300 var(--fill), #fff var(--fill));
}
.scrollbar {
  display: flex;
  flex-direction: column;
  justify-content: space-between;
  align-items: center;
  width: 8px;
  padding: 3px 1px;
  background: #f1f1f1;
}
.scrollbar::before, .scrollbar::after {
  content: "";
  border: 2px solid transparent;
}
.scrollbar::before {
  border-top: none;
  border-bottom-color: #777;
}
.scrollbar::after {
  border-bottom: none;
  border-top-color: #555;
}
.thumb {
  width: 100%;
  height: 66%;
  margin: 4px 0 auto;
  background: #c1c1c1;
}

/* taskbar */
.taskbar {
  grid-column: 1 / -1;
  display: flex;
  align-items: center;
  background: #0e0e0e;
  color: #ddd;
  font-family: Roboto, sans-serif;
}
.start, .app {
  width: 27px;
}
.grip {
  width: 4px;
  height: 15px;
  margin-right: 4px;
  background: repeating-linear-gradient(#555 0 1px, #111 1px 3px);
}
.task {
  width: 53px;
  height: 19px;
  padding-left: 1px;
  border: 1px solid #555;
  background: linear-gradient(to right, #2c2c2c, #777 50%, #3a3a3a);
  justify-content: flex-start;
  white-space: nowrap;
  overflow: hidden;
}
.task.current {
  background: linear-gradient(to right, #aaa, #888);
  color: #fff;
}
.tray {
  display: flex;
  align-items: center;
  gap: 2px;
  margin-left: auto;
  height: 100%;
}
.lang, .up {
  width: 12px;
}
.up {
  font-size: 5px;
  text-align: center;
}
.tray time {
  width: 40px;
  line-height: 9px;
  text-align: center;
}
.show-desktop {
  width: 5px;
  height: 100%;
  border: 1px solid #444;
  background: #000;
}

/* red marks */
.note {
  position: absolute;
  color: #ed1c24;
  font: bold 9px/12px "Open Sans", sans-serif;
}
.organ {
  left: 198px;
  top: 287px;
}
.guitar {
  left: 668px;
  top: 236px;
}
.note-line {
  position: absolute;
  left: 256px;
  top: 294px;
  width: 54px;
  height: 2px;
  background: #ed1c24;
}
.frame {
  position: absolute;
  border: 2px solid #ed1c24;
}
.frame-organ {
  left: 300px;
  top: 272px;
  width: 373px;
  height: 39px;
}
.frame-guitar {
  left: 287px;
  top: 244px;
  width: 375px;
  height: 34px;
}
.arrow {
  position: absolute;
  fill: none;
  stroke: #ed1c24;
  stroke-width: 2px;
}
.arrow-organ {
  left: 677px;
  top: 287px;
  width: 68px;
  height: 16px;
}
.arrow-guitar {
  left: 664px;
  top: 255px;
  width: 90px;
  height: 21px;
}
```
